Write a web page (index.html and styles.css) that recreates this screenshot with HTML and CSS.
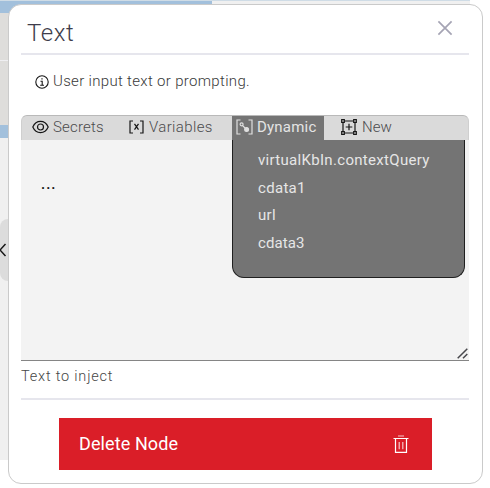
FILE: index.html
```html
<!DOCTYPE html>
<html lang="en">
<head>
<meta charset="utf-8">
<title>Text</title>
<link rel="stylesheet" href="styles.css">
</head>
<body>
<div class="canvas">
  <div class="node"><div class="node-row"></div></div>
  <div class="drawer-tab"><svg width="8" height="16" viewBox="0 0 8 16"><path d="M5.5 2 0 8l5.5 6" fill="none" stroke="#161616" stroke-width="1.5"/></svg></div>
</div>
<main class="panel">
  <header class="panel-head">
    <h1><span class="title">Text</span></h1>
    <svg class="close" width="16" height="16" viewBox="0 0 16 16"><path d="M1.4 1.4 14.6 14.6M14.6 1.4 1.4 14.6" fill="none" stroke="#a5a4b4" stroke-width="1.7"/></svg>
  </header>
  <p class="hint">
    <svg width="14" height="14" viewBox="0 0 14 14" fill="none" stroke="#161616" stroke-width="1.1"><circle cx="7" cy="7" r="6.2"/><path d="M5.5 6.200H7.200V10.200M5.200 10.200H9"/><circle cx="7" cy="3.900" r=".4" fill="#161616" stroke-width=".6"/></svg>
    <span class="hint-text">User input text or prompting.</span>
  </p>
  <section class="editor">
    <nav class="tabs">
      <div class="tab secrets">
        <svg width="17" height="14" viewBox="0 0 17 14" fill="none" stroke="#161616" stroke-width="1.2"><path d="M.8 7C2.5 3.2 5.3 1.4 8.5 1.4S14.500 3.200 16.200 7C14.500 10.800 11.700 12.600 8.500 12.600S2.500 10.800.8 7Z"/><circle cx="8.500" cy="7" r="3"/></svg>
        <span class="t-secrets">Secrets</span>
      </div>
      <div class="tab variables">
        <svg width="15" height="14" viewBox="0 0 15 14" fill="none" stroke="#161616" stroke-width="1.2"><path d="M4 1H1V13H4M11 1H14V13H11M5.500 3.800 9.500 9.700M9.500 3.800 5.500 9.700"/></svg>
        <span class="t-variables">Variables</span>
      </div>
      <div class="tab dynamic">
        <svg width="17" height="16" viewBox="0 0 17 16" fill="none" stroke="#e0e0e0" stroke-width="1.2"><path d="M4.500 1H1V15H4.500M12.500 1H16V15H12.500M6.500 6.500 10 10"/><circle cx="5.600" cy="5.300" r="1.500"/><circle cx="10.600" cy="10.500" r="1.900" fill="#e0e0e0"/></svg>
        <span class="t-dynamic">Dynamic</span>
        <ul class="menu">
          <li class="m-query">virtualKbIn.contextQuery</li>
          <li class="m-one">cdata1</li>
          <li class="m-url">url</li>
          <li class="m-three">cdata3</li>
        </ul>
      </div>
      <div class="tab new">
        <svg width="16" height="16" viewBox="0 0 16 16" fill="none" stroke="#161616" stroke-width="1.2"><path d="M3 2H13M3 14H13M2 3V13M14 3V13M8 4.700V11.300M4.700 8H11.300"/><path fill="#dadada" d="M.7.7H3.300V3.300H.7ZM12.700.7H15.300V3.300H12.700ZM.7 12.700H3.300V15.300H.7ZM12.700 12.700H15.300V15.300H12.700Z"/></svg>
        <span class="t-new">New</span>
      </div>
    </nav>
    <div class="textarea"><span>...</span>
      <svg class="grip" width="11" height="11" viewBox="0 0 11 11"><path d="M.7 10.300 10.300.7M6 10.300 10.300 6" fill="none" stroke="#48484c" stroke-width="1.500"/></svg>
    </div>
    <div class="caption"><span class="caption-text">Text to inject</span></div>
  </section>
  <footer class="foot">
    <button class="delete"><span class="delete-text">Delete Node</span>
      <svg width="16" height="18" viewBox="0 0 16 18" fill="none" stroke="#fff" stroke-width="1.200"><path d="M.5 3.500H15.500M2.500 3.500V17.300H13.500V3.500"/><path d="M5 1H11M6.200 7V14.200M9.800 7V14.200" opacity=".75"/></svg>
    </button>
  </footer>
</main>
</body>
</html>
```
FILE: styles.css
```css
* { box-sizing: border-box; }
body {
  margin: 0;
  width: 490px;
  height: 488px;
  overflow: hidden;
  position: relative;
  padding: 4px 0 0 8px;
  background: #fff;
  font: 300 15px/20px Roboto, "Liberation Sans", sans-serif;
}
span, li { white-space: nowrap; }
svg { display: block; flex: none; }
.canvas {
  position: absolute;
  inset: 0 20px 28px 0;
  border-top: 1px solid #cfdce6;
  background: #f0f0f0;
}
.node {
  width: 212px;
  height: 137px;
  border: solid #a2c0dc;
  border-width: 12px 1px 13px 0;
  background: #dedddb;
}
.node-row { height: 48px; border-bottom: 1px solid #efeff2; }
.drawer-tab {
  position: absolute;
  top: 218px;
  left: 0;
  width: 16px;
  height: 62px;
  padding-top: 23px;
  border-radius: 8px 0 0 8px;
  background: #dcdcdc;
}
.panel {
  position: relative;
  width: 475px;
  height: 480px;
  padding: 0 13px 0 12px;
  border: 1px solid #cacaca;
  border-radius: 13px;
  background: #fff;
}
.panel-head {
  display: flex;
  justify-content: space-between;
  width: 448px;
  height: 50px;
  padding: 15px 16px 0 6px;
  border-bottom: 2px solid #e6e6ed;
}
h1 { margin: -2px 0 0; font-size: 24px; line-height: 30px; font-weight: 300; letter-spacing: .6px; color: #3e3d4b; }
.hint {
  display: flex;
  gap: 4px;
  height: 60px;
  margin: 0;
  padding: 15px 0 0 14px;
  color: #393939;
}
.hint svg { margin-top: 5px; }
.hint-text { line-height: 22px; letter-spacing: .32px; }
.tabs {
  display: flex;
  width: 448px;
  height: 25px;
  border: 1px solid #b9b9b9;
  border-width: 1px 1px 0;
  border-color: #b9b9b9 #cfcfcf;
  border-radius: 6px 6px 0 0;
  background: #dadada;
  color: #4b4b4d;
}
.tab { display: flex; align-items: center; height: 24px; }
.tab > svg { margin-top: -2px; }
.tab > span { line-height: 24px; margin-top: -2px; }
.secrets { gap: 4px; width: 98px; padding-left: 10px; letter-spacing: .2px; }
.variables { gap: 5px; width: 112px; padding-left: 9px; letter-spacing: .36px; }
.dynamic {
  position: relative;
  gap: 4px;
  width: 92px;
  padding-left: 4px;
  background: #747474;
  color: #e4e4e4;
}
.t-dynamic { font-weight: 400; letter-spacing: .2px; }
.new { gap: 5px; padding-left: 17px; }
.menu {
  position: absolute;
  z-index: 1;
  top: 24px;
  left: 0;
  width: 233px;
  height: 138px;
  margin: 0;
  padding: 7px 0 0 25px;
  list-style: none;
  border: solid #202020;
  border-width: 0 1px 1px;
  border-radius: 0 0 12px 12px;
  background: #747474;
  color: #e6e6e6;
  font-weight: 400;
  line-height: 27.600px;
  letter-spacing: .31px;
}
.m-three { letter-spacing: .1px; }
.textarea {
  position: relative;
  width: 448px;
  height: 221px;
  padding: 34px 20px;
  background: #f3f3f3;
  border-bottom: 1px solid #858585;
  color: #161616;
  font-weight: 500;
  letter-spacing: 1px;
}
.grip { position: absolute; right: 1px; bottom: 1px; }
.caption {
  height: 39px;
  padding-top: 6px;
  width: 448px;
  border-bottom: 2px solid #e6e6ed;
  color: #464646;
  font-size: 14.500px;
  letter-spacing: .8px;
}
.foot { padding: 18px 0 0 38px; }
.delete {
  display: flex;
  justify-content: space-between;
  align-items: center;
  width: 373px;
  height: 52px;
  padding: 0 23px 0 20px;
  border: 0;
  background: #da1e28;
  color: #fff;
  font: 400 18px/24px Roboto, "Liberation Sans", sans-serif;
}
.delete-text { letter-spacing: .1px; }
```
